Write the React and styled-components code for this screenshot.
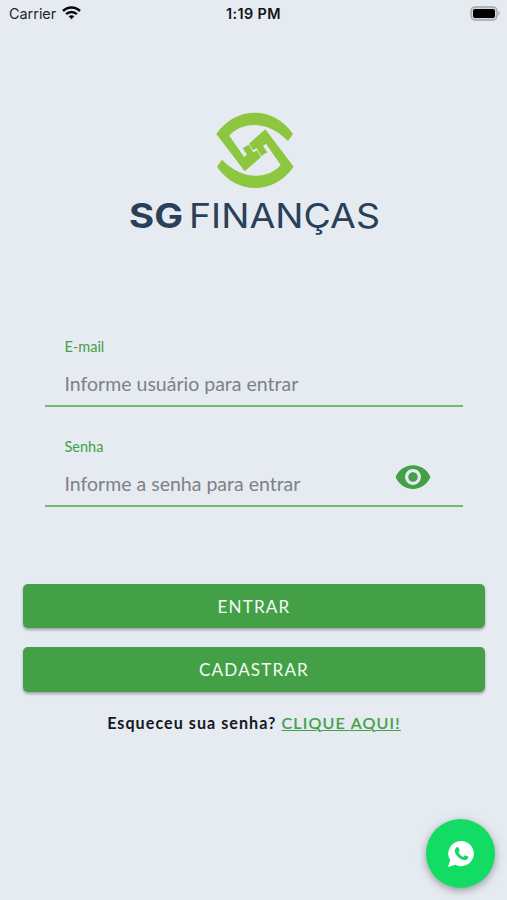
import React, { useState } from "react";
import styled, { createGlobalStyle } from "styled-components";
import { MdVisibility, MdVisibilityOff } from "react-icons/md";

const GlobalStyle = createGlobalStyle`
    * {
        box-sizing: border-box;
    }
    body {
        margin: 0;
        background: #e6ebf2;
        font-family: Lato, sans-serif;
    }
`

const Screen = styled.div`
    display: flex;
    flex-direction: column;
    position: relative;
    height: 900px;
    background: #e6ebf2;
    overflow: hidden;
`

const StatusBar = styled.header`
    display: grid;
    grid-template-columns: 1fr auto 1fr;
    align-items: center;
    height: 26px;
    padding: 0 6px 0 9px;
    font-family: Inter, sans-serif;
    font-size: 14.4px;
    color: #23262a;
`

const Carrier = styled.div`
    display: flex;
    align-items: center;
    gap: 6px;
`

const Clock = styled.div`
    margin-right: 3px;
    font-size: 14.4px;
    font-weight: 600;
    letter-spacing: 0.4px;
    color: #111316;
`

const Battery = styled.svg`
    justify-self: end;
`

const Brand = styled.div`
    display: flex;
    flex-direction: column;
    align-items: center;
    height: 294px;
    padding-top: 74px;
`

const Mark = styled.svg`
    display: block;
    margin-left: 3px;
`

const Wordmark = styled.svg`
    display: block;
    font-family: Inter, sans-serif;
    fill: #2a4059;
`

const Form = styled.form`
    display: flex;
    flex-direction: column;
    padding: 0 22px 0 23px;
`

const Field = styled.label`
    display: flex;
    align-items: center;
    height: 87px;
    margin: 0 22px 13px;
    padding: 0 31px 0 19.5px;
    border-bottom: 2px solid #6fb973;
`

const FieldText = styled.span`
    display: flex;
    flex: 1;
    flex-direction: column;
    padding-top: 17px;
`

const Label = styled.span`
    height: 25px;
    font-size: 14.5px;
    line-height: 24px;
    color: #43a047;
`

const Input = styled.input`
    width: 100%;
    height: 48px;
    padding: 0;
    border: 0;
    outline: 0;
    background: transparent;
    font-family: inherit;
    font-size: 19.5px;
    color: #333;
    &::placeholder {
        color: #7d8186;
        opacity: 1;
    }
`

const EyeButton = styled.button`
    display: flex;
    padding: 29px 0 0;
    border: 0;
    background: none;
    color: #43a047;
`

const Actions = styled.div`
    display: flex;
    flex-direction: column;
    gap: 19px;
    padding-top: 64px;
`

const Button = styled.button`
    height: 44.4px;
    padding: 0;
    border: 0;
    border-radius: 5px;
    background: #43a047;
    box-shadow: 0 2px 3px rgba(0, 0, 0, 0.3);
    color: #f2fbf2;
    font-family: inherit;
    font-size: 17.1px;
    letter-spacing: 1.15px;
`

const Forgot = styled.p`
    margin: 19px 0 0;
    text-align: center;
    font-size: 16.1px;
    line-height: 24px;
    font-weight: 700;
    letter-spacing: 1.05px;
    color: #15181c;
`

const ForgotLink = styled.a`
    color: #43a047;
    font-weight: 500;
    letter-spacing: 1.15px;
    text-decoration: underline;
    text-decoration-thickness: 1px;
    -webkit-text-stroke: 0.2px #43a047;
`

const WhatsApp = styled.a`
    display: flex;
    align-items: center;
    justify-content: center;
    position: absolute;
    right: 12px;
    bottom: 12px;
    width: 69px;
    height: 69px;
    border-radius: 50%;
    background: #12dc64;
    box-shadow: 0 3px 7px rgba(0, 0, 0, 0.26), 0 1px 14px rgba(0, 0, 0, 0.1);
`

// one half of the mark, the other half is the same shape turned around
const HALF = "M264 123 L279 102 C222 18 108 16 49 102 L134 214 L183 171 L171 151 L160 157 L146 134 L128 145 L141 164 L132 171 L88 107 C124 65 201 58 264 123 Z"

function Logo() {
    return (
        <Brand>
            <Mark width="110" height="92" viewBox="0 0 330 276" fill="#8dc63f">
                <path d={HALF} />
                <path d={HALF} transform="rotate(180 165 151)" />
            </Mark>
            <Wordmark width="264" height="56" viewBox="0 0 264 56">
                <text x="7" y="36" fontSize="33.5" fontWeight="700" textLength="54" lengthAdjust="spacingAndGlyphs">SG</text>
                <text x="67" y="36" fontSize="33.5" fontWeight="400" textLength="191" lengthAdjust="spacingAndGlyphs">FINANÇAS</text>
            </Wordmark>
        </Brand>
    )
}

export default function App() {
    const [visible, setVisible] = useState(false)

    return (
        <Screen>
            <GlobalStyle />
            <StatusBar>
                <Carrier>
                    Carrier
                    <svg width="19" height="14" viewBox="0 0 19 14" fill="none" stroke="#08090a" strokeWidth="2.5">
                        <path d="M1 5 C5.8 .2 13.2 .2 18 5" />
                        <path d="M4.1 8.1 C7.2 5.2 11.8 5.2 14.9 8.1" />
                        <path d="M6.7 10.3 C8.3 8.9 10.7 8.9 12.3 10.3 L9.5 13.3 Z" fill="#08090a" stroke="none" />
                    </svg>
                </Carrier>
                <Clock>1:19 PM</Clock>
                <Battery width="31" height="15" viewBox="0 0 31 15">
                    <rect x="1" y="1" width="26" height="13" rx="4" fill="#d3d6d9" stroke="#a2a5a8" strokeWidth="1.4" />
                    <rect x="3" y="3" width="22" height="9" rx="2" fill="#000" />
                    <path d="M28.5 5 Q31 7.5 28.5 10 Z" fill="#a2a5a8" />
                </Battery>
            </StatusBar>
            <Logo />
            <Form onSubmit={(e) => e.preventDefault()}>
                <Field>
                    <FieldText>
                        <Label>E-mail</Label>
                        <Input type="email" placeholder="Informe usuário para entrar" />
                    </FieldText>
                </Field>
                <Field>
                    <FieldText>
                        <Label>Senha</Label>
                        <Input type={visible ? "text" : "password"} placeholder="Informe a senha para entrar" />
                    </FieldText>
                    <EyeButton type="button" onClick={() => setVisible(!visible)}>
                        {visible ? <MdVisibilityOff size={38} /> : <MdVisibility size={38} />}
                    </EyeButton>
                </Field>
                <Actions>
                    <Button>ENTRAR</Button>
                    <Button type="button">CADASTRAR</Button>
                </Actions>
                <Forgot>
                    Esqueceu sua senha? <ForgotLink>CLIQUE AQUI!</ForgotLink>
                </Forgot>
            </Form>
            <WhatsApp>
                <svg width="26" height="26" viewBox="0 0 26 26">
                    <path d="M13 0 A12.8 12.6 0 1 1 7.2 23.8 L0 26 L2.2 19.2 A12.8 12.6 0 0 1 13 0 Z" fill="#fff" />
                    <path d="M8.6 6.4 C9.5 5.7 10.3 6 10.7 7 L11.6 9.2 C11.9 10 10.8 10.7 10.5 11.2 C11.6 13.5 13.3 15 15.6 15.9 C16.3 15.3 16.9 14.1 17.6 14.4 L20.1 15.6 C20.8 16 20 18 18.7 18.7 C13.5 21 5.5 13 6.9 8.7 C7.2 7.7 7.8 6.9 8.6 6.4 Z" fill="#12dc64" />
                </svg>
            </WhatsApp>
        </Screen>
    )
}
